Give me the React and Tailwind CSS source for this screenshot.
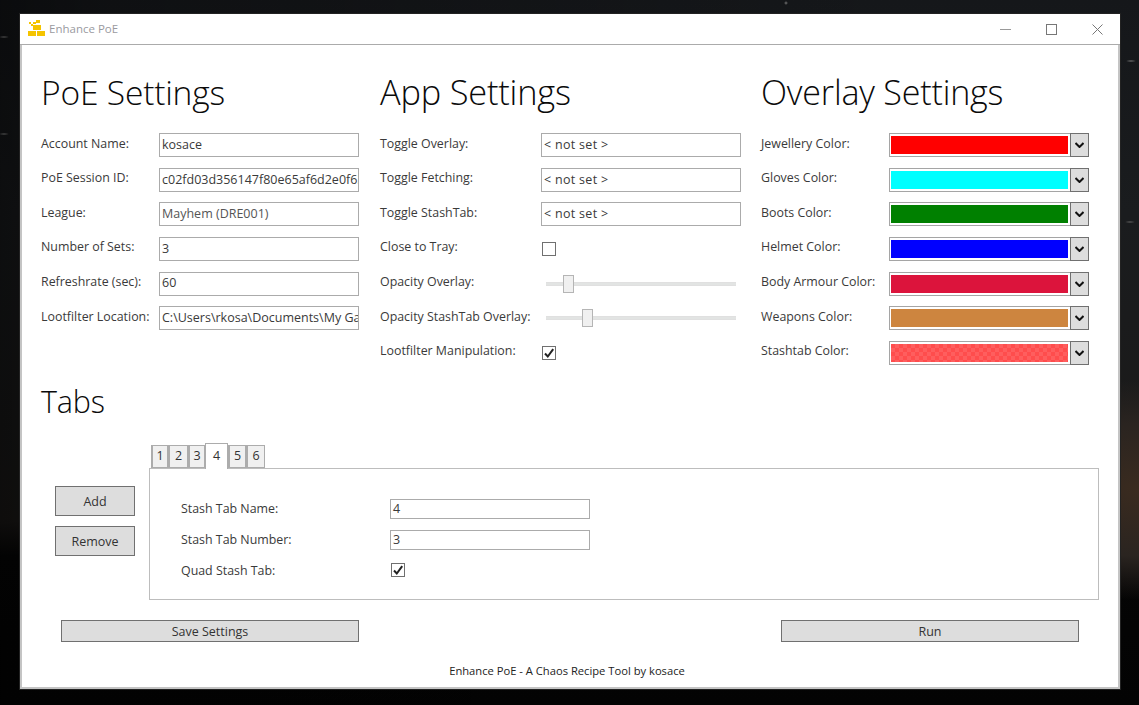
const FONT = "font-['Open_Sans',sans-serif]";

function Row({ label, children }) {
  return (
    <div className="flex items-center h-[34.6px]">
      <div className="w-[var(--lw)] shrink-0 text-[12.4px] text-[#3a3a3a] leading-none -mt-[3px] whitespace-nowrap">{label}</div>
      {children}
    </div>
  );
}

function TextInput({ value, w = "w-[200px]", h = "h-[24px]" }) {
  return (
    <div className={`${w} ${h} border border-[#ababab] bg-white pl-[2px] flex items-center text-[12.5px] text-[#3a3a3a] overflow-hidden whitespace-nowrap`}>
      {value}
    </div>
  );
}

function Check({ checked }) {
  return (
    <div className="w-[14px] h-[14px] border border-[#707070] bg-white flex items-center justify-center">
      {checked && (
        <svg width="12" height="12" viewBox="0 0 12 12">
          <path d="M2 6.5 L4.8 9.5 L10.2 2.2" fill="none" stroke="#222" strokeWidth="2" />
        </svg>
      )}
    </div>
  );
}

function Slider({ left }) {
  return (
    <div className="relative w-[200px] h-[18px] flex items-center pl-[5px] pr-[5px]">
      <div className="w-full h-[4px] bg-[#e2e4e3] border-y border-[#e0e0e0]" />
      <div className="absolute top-0 w-[11px] h-[18px] bg-[#f0f0f0] border border-[#b5b5b5]" style={{ left }} />
    </div>
  );
}

function Color({ bg, pattern }) {
  return (
    <div className="flex w-[200px] h-[24px] border border-[#a5a5a5] bg-white">
      <div className="flex-1 p-[2px] pl-[1px]">
        <div
          className={`w-full h-full ${bg} ${pattern ? "bg-[linear-gradient(45deg,#ff5e5e_25%,transparent_25%,transparent_75%,#ff5e5e_75%),linear-gradient(45deg,#ff5e5e_25%,transparent_25%,transparent_75%,#ff5e5e_75%)] bg-[length:8px_8px] bg-[position:0_0,4px_4px]" : ""}`}
        />
      </div>
      <div className="w-[19px] -m-px ml-0 h-[24px] bg-[#dddddd] border border-[#707070] flex items-center justify-center">
        <svg width="9" height="6" viewBox="0 0 9 6">
          <path d="M0.5 1 L4.5 5 L8.5 1" fill="none" stroke="#111" strokeWidth="2" />
        </svg>
      </div>
    </div>
  );
}

function Heading({ children, className = "" }) {
  return <h1 className={`font-light leading-[44px] text-[#0a0a0a] tracking-[-0.2px] ${className}`}>{children}</h1>;
}

function Btn({ children, className = "" }) {
  return (
    <div className={`bg-[#dddddd] border border-[#707070] flex items-center justify-center pt-[3px] text-[12.5px] text-[#333] ${className}`}>
      {children}
    </div>
  );
}

function Tab({ children, active, w }) {
  return active ? (
    <div className={`${w} h-[26px] -mb-px z-10 bg-white border border-b-0 border-[#acacac] flex items-center justify-center text-[12.5px] text-[#333]`}>
      {children}
    </div>
  ) : (
    <div className={`${w} h-[23px] bg-[#f0f0f0] border-t border-b border-l-2 border-r border-[#acacac] flex items-center justify-center text-[12.5px] text-[#333]`}>
      {children}
    </div>
  );
}

export default function App() {
  return (
    <div className={`${FONT} w-[1139px] h-[705px] overflow-hidden pt-[14px] pl-[20px] bg-[radial-gradient(ellipse_5px_1.5px_at_1131px_61px,#666_0%,transparent_100%),radial-gradient(ellipse_5px_1.5px_at_1130px_222px,#555_0%,transparent_100%),radial-gradient(ellipse_5px_1.5px_at_4px_37px,#444_0%,transparent_100%),radial-gradient(ellipse_5px_1.5px_at_4px_134px,#444_0%,transparent_100%),radial-gradient(circle_2px_at_786px_3px,#777_0%,transparent_100%),linear-gradient(90deg,rgba(0,0,0,0.5)_0%,rgba(0,0,0,0.3)_10%,transparent_80%),radial-gradient(ellipse_170px_110px_at_1139px_490px,#3a2b1f_0px,#2a2420_60%,transparent_100%),linear-gradient(180deg,#15171a_0%,#1a1c1e_30%,#1a1a1a_60%,#1c1a18_74%,#050505_79%,#030303_100%)]`}>
      <div className="w-[1100px] h-[675px] bg-white flex flex-col shadow-[0_0_0_1px_#222]">
        <div className="h-[31px] shrink-0 border-b-[1px] border-[#ababab] flex items-center pl-[8px]">
          <svg width="17" height="17" viewBox="0 0 17 17" className="shrink-0 mb-[1px]">
            <g fill="#f5c400">
              <rect x="1" y="2" width="2" height="2" />
              <rect x="3" y="4" width="2" height="2" />
              <rect x="8" y="0" width="4" height="3" />
              <rect x="5" y="2" width="3" height="2" />
              <rect x="5" y="5" width="8" height="5" />
              <rect x="0" y="11" width="8" height="5" />
              <rect x="9" y="11" width="8" height="5" />
            </g>
          </svg>
          <span className="ml-[4px] text-[11.5px] text-[#9a9a9f]">Enhance PoE</span>
          <div className="ml-auto flex items-center text-[#777]">
            <svg width="11" height="11" viewBox="0 0 11 11" className="mr-[35px]"><path d="M0 5.5 H11" stroke="#999" /></svg>
            <svg width="11" height="11" viewBox="0 0 11 11" className="mr-[35px]"><rect x="0.5" y="0.5" width="10" height="10" fill="none" stroke="#777" /></svg>
            <svg width="11" height="11" viewBox="0 0 11 11" className="mr-[17px]"><path d="M0.5 0.5 L10.5 10.5 M10.5 0.5 L0.5 10.5" stroke="#777" /></svg>
          </div>
        </div>

        <div className="flex-1 flex flex-col border-l-2 border-r-2 border-b-2 border-[#c4c4c4] pl-[19px] pr-[19px]">
          <div className="flex pt-[25px]">
            <div className="w-[318px] mr-[21px] [--lw:118px]">
              <Heading className="mb-[14px] text-[33.6px]">PoE Settings</Heading>
              <Row label="Account Name:"><TextInput value="kosace" /></Row>
              <Row label="PoE Session ID:"><TextInput value="c02fd03d356147f80e65af6d2e0f63a1" /></Row>
              <Row label="League:"><TextInput value={<span className="text-[#555]">Mayhem (DRE001)</span>} /></Row>
              <Row label="Number of Sets:"><TextInput value="3" /></Row>
              <Row label="Refreshrate (sec):"><TextInput value="60" /></Row>
              <Row label="Lootfilter Location:"><TextInput value="C:\Users\rkosa\Documents\My Games\Path" /></Row>
            </div>
            <div className="w-[361px] mr-[20px] [--lw:161px]">
              <Heading className="mb-[14px] text-[34.4px]">App Settings</Heading>
              <Row label="Toggle Overlay:"><TextInput value={<span className="tracking-[0.3px]">{"< not set >"}</span>} /></Row>
              <Row label="Toggle Fetching:"><TextInput value={<span className="tracking-[0.3px]">{"< not set >"}</span>} /></Row>
              <Row label="Toggle StashTab:"><TextInput value={<span className="tracking-[0.3px]">{"< not set >"}</span>} /></Row>
              <Row label="Close to Tray:"><div className="ml-[1px]"><Check /></div></Row>
              <Row label="Opacity Overlay:"><Slider left="22px" /></Row>
              <Row label="Opacity StashTab Overlay:"><Slider left="41px" /></Row>
              <Row label="Lootfilter Manipulation:"><div className="ml-[1px]"><Check checked /></div></Row>
            </div>
            <div className="w-[328px] [--lw:128px]">
              <Heading className="mb-[14px] text-[34.1px]">Overlay Settings</Heading>
              <Row label="Jewellery Color:"><Color bg="bg-[#ff0000]" /></Row>
              <Row label="Gloves Color:"><Color bg="bg-[#00ffff]" /></Row>
              <Row label="Boots Color:"><Color bg="bg-[#008000]" /></Row>
              <Row label="Helmet Color:"><Color bg="bg-[#0000ff]" /></Row>
              <Row label="Body Armour Color:"><Color bg="bg-[#dc143c]" /></Row>
              <Row label="Weapons Color:"><Color bg="bg-[#cd853f]" /></Row>
              <Row label="Stashtab Color:"><Color bg="bg-[#ff4d4d]" pattern /></Row>
            </div>
          </div>

          <Heading className="mt-[9px] text-[30.5px]">Tabs</Heading>

          <div className="flex mt-[20px]">
            <div className="w-[108px] pl-[14px] pt-[43px] flex flex-col gap-[10px] shrink-0">
              <Btn className="w-[80px] h-[30px]">Add</Btn>
              <Btn className="w-[80px] h-[30px]">Remove</Btn>
            </div>
            <div className="w-[950px]">
              <div className="flex items-end pl-[2px] h-[25px]">
                <Tab w="w-[17px]">1</Tab>
                <Tab w="w-[20px]">2</Tab>
                <Tab w="w-[17px]">3</Tab>
                <Tab w="w-[23px]" active>4</Tab>
                <Tab w="w-[18px]">5</Tab>
                <Tab w="w-[19px]">6</Tab>
              </div>
              <div className="h-[132px] border border-[#bdbdbd] pl-[31px] pt-[30px]">
                <div className="flex items-center h-[20px] mb-[11px]">
                  <div className="w-[209px] pt-px text-[12.4px] text-[#3a3a3a]">Stash Tab Name:</div>
                  <TextInput value="4" h="h-[20px]" />
                </div>
                <div className="flex items-center h-[20px] mb-[11px]">
                  <div className="w-[209px] text-[12.4px] text-[#3a3a3a]">Stash Tab Number:</div>
                  <TextInput value="3" h="h-[20px]" />
                </div>
                <div className="flex items-center h-[20px]">
                  <div className="w-[210px] text-[12.4px] text-[#3a3a3a]">Quad Stash Tab:</div>
                  <div className="-mt-[3px]"><Check checked /></div>
                </div>
              </div>
            </div>
          </div>

          <div className="flex justify-between pl-[20px] pr-[20px] mt-[20px]">
            <Btn className="w-[298px] h-[22px]">Save Settings</Btn>
            <Btn className="w-[298px] h-[22px]">Run</Btn>
          </div>

          <div className="text-center text-[11.2px] text-[#222] mt-[20px] pr-[6px] leading-[18px]">
            Enhance PoE - A Chaos Recipe Tool by kosace
          </div>
        </div>
      </div>
    </div>
  );
}
